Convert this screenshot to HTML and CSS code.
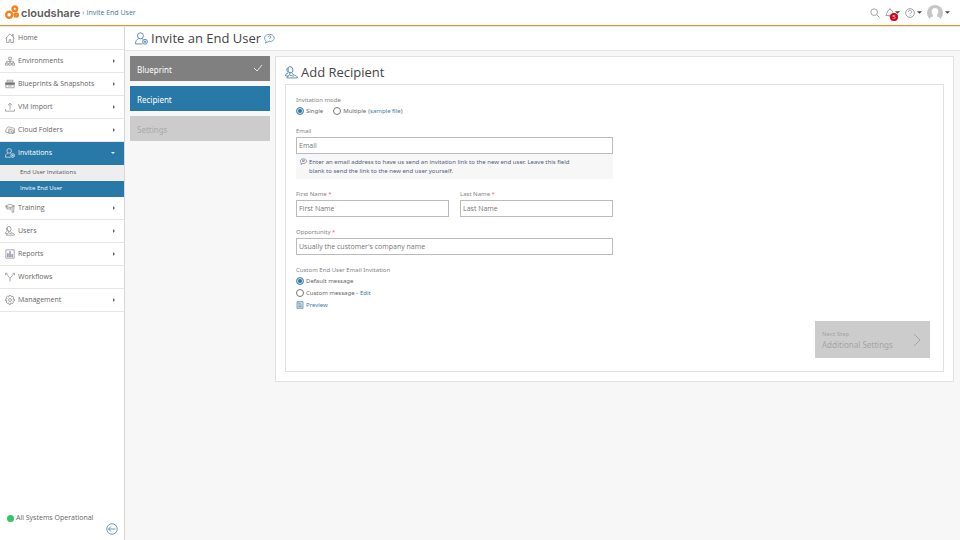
FILE: index.html
```html
<!DOCTYPE html>
<html lang="en">
<head>
<meta charset="utf-8">
<meta name="viewport" content="width=device-width, initial-scale=1">
<title>Invite End User</title>
<link rel="stylesheet" href="styles.css">
</head>
<body>
<svg class="defs" aria-hidden="true">
  <symbol id="user-plus" viewBox="0 0 24 24"><circle cx="10" cy="7" r="5.500"/><path d="M7 12c-4 2-6 4-6 10h13M13 12l2 2"/><circle cx="18.500" cy="18" r="4.500"/><path d="M16 18h5M18.500 15.500v5"/></symbol>
  <symbol id="users" viewBox="0 0 24 24"><ellipse cx="10" cy="7" rx="4.500" ry="5.800" transform="rotate(-12 10 7)"/><path d="M6 3C2 4 3 10 6 12L1 16v2l5 1M9 12v3l-6 7h20c0-3-2-4-8-6l-2-3M9 17l7 2"/></symbol>
  <symbol id="caret" viewBox="0 0 4 4"><path d="M0 1h4L2 3z"/></symbol>
</svg>
<header class="topbar">
  <a class="brand" href="#">
    <svg class="brand-mark" viewBox="0 0 14 15" aria-hidden="true"><circle cx="4.200" cy="9.800" r="3"/><circle cx="9.800" cy="3.800" r="2.300"/><circle cx="11.200" cy="10" r="1.600"/></svg>
    <span class="brand-name">cloudshare</span>
  </a>
  <span class="crumb-arrow">›</span>
  <a class="crumb" href="#">Invite End User</a>
  <div class="tools">
    <button class="tool search" aria-label="Search"><svg class="icon" viewBox="0 0 24 24"><circle cx="10" cy="10" r="8"/><path d="M16 16l7 7"/></svg></button>
    <button class="tool bell" aria-label="Notifications"><svg class="icon" viewBox="0 0 24 24"><path d="M2 18c4-3 2-13 9-14V2h2v2c7 1 5 11 9 14zM9 18c0 5 6 5 6 0"/></svg><span class="badge">5</span><svg class="caret"><use href="#caret"/></svg></button>
    <button class="tool" aria-label="Help"><svg class="icon" viewBox="0 0 24 24"><circle cx="12" cy="12" r="10.500"/><path d="M8 9c0-5 8-5 8 0 0 3-4 3-4 6M12 17v2"/></svg><svg class="caret"><use href="#caret"/></svg></button>
    <button class="tool account" aria-label="Account"><svg class="avatar" viewBox="0 0 16 16"><circle cx="8" cy="8" r="8" fill="#c6c6c6"/><path d="M2 16c0-3 2-4 4-4.500V10C4 8 4 3 8 3s4 5 2 7v1.500c2 .5 4 1.500 4 4.500z" fill="#fff"/></svg><svg class="caret"><use href="#caret"/></svg></button>
  </div>
</header>
<div class="shell">
  <aside class="sidebar">
    <nav>
      <a class="item" href="#"><svg class="icon" viewBox="0 0 24 24"><path d="M1 13L12 2l11 11M4 10v13h6v-7h4v7h6V10M18 7V3h2v6"/></svg><span>Home</span></a>
      <a class="item more" href="#"><svg class="icon" viewBox="0 0 24 24"><path d="M9 3h6v6H9zM12 9v8M4 17v-4h16v4M1 17h6v5H1zM9 17h6v5H9zM17 17h6v5h-6z"/></svg><span>Environments</span></a>
      <a class="item more" href="#"><svg class="icon" viewBox="0 0 24 24"><path d="M5 3h14v4H5z"/><path d="M1 9h22v4H1z" fill="currentColor"/><path d="M2 14h20v7H2zM8 17h8"/></svg><span>Blueprints &amp; Snapshots</span></a>
      <a class="item more" href="#"><svg class="icon" viewBox="0 0 24 24"><path d="M12 18V3M7 8l5-5 5 5M1 17v5h22v-5"/></svg><span>VM Import</span></a>
      <a class="item more" href="#"><svg class="icon" viewBox="0 0 24 24"><path d="M9 18H5c-5 0-5-7-1-8 0-6 8-7 10-3 5-2 9 1 9 5v7h-6M9 10h5l1 2h5v8H9zM12 13v5M16 14v5"/></svg><span>Cloud Folders</span></a>
      <a class="item more open" href="#"><svg class="icon"><use href="#user-plus"/></svg><span>Invitations</span></a>
      <a class="sub" href="#">End User Invitations</a>
      <a class="sub current" href="#" aria-current="page">Invite End User</a>
      <a class="item more" href="#"><svg class="icon" viewBox="0 0 24 24"><path d="M1 7l11-4 11 4-11 4zM5 9v6c3-2 7-1 8 1V11M17 9v13h4V8M3 8v5"/></svg><span>Training</span></a>
      <a class="item more" href="#"><svg class="icon"><use href="#users"/></svg><span>Users</span></a>
      <a class="item more reports" href="#"><svg class="icon" viewBox="0 0 24 24"><path d="M2 2h20v20H2zM6 19v-8h2v8zM11 19V6h2v13zM16 19v-6h2v6z"/></svg><span>Reports</span></a>
      <a class="item" href="#"><svg class="icon" viewBox="0 0 24 24"><path d="M12 23v-8L3 4M1 8V3h5M12 15l9-11M18 3h5v5"/></svg><span>Workflows</span></a>
      <a class="item more" href="#"><svg class="icon" viewBox="0 0 24 24"><path d="M10 1h4l1 3 4-1 2 4-2 3 4 1v3l-4 1 1 4-3 2-3-2-1 4h-3l-1-4-4 1-2-3 2-3-4-1v-3l4-1-2-4 3-2 3 2z"/><circle cx="12" cy="12" r="3.500"/></svg><span>Management</span></a>
    </nav>
    <footer class="status">
      <a class="systems" href="#">All Systems Operational</a>
      <button class="collapse" aria-label="Collapse menu"><svg class="icon" viewBox="0 0 24 24"><circle cx="12" cy="12" r="10.500"/><path d="M19 12H5M10 7l-5 5 5 5"/></svg></button>
    </footer>
  </aside>
  <main class="main">
    <div class="page-title">
      <svg class="icon"><use href="#user-plus"/></svg>
      <h1>Invite an End User</h1>
      <svg class="icon help" viewBox="0 0 24 24"><path d="M5 18C-2 13 1 3 12 3s14 11 5 15c-2 1-6 1-8 1l-6 3zM9 9c0-4 6-4 6 0 0 2-3 2-3 4M12 15v1"/></svg>
    </div>
    <div class="wizard">
      <ol class="steps">
        <li class="step done">Blueprint<svg class="check" viewBox="0 0 10 8"><path d="M1 4l3 3 5-6"/></svg></li>
        <li class="step active">Recipient</li>
        <li class="step pending">Settings</li>
      </ol>
      <section class="card">
        <div class="card-title"><svg class="icon"><use href="#users"/></svg><h2>Add Recipient</h2></div>
        <form class="panel">
          <div class="fields">
            <div class="group" role="radiogroup" aria-labelledby="mode">
              <span class="label" id="mode">Invitation mode</span>
              <div class="choices">
                <label class="choice"><input type="radio" name="mode" checked>Single</label>
                <label class="choice"><input type="radio" name="mode">Multiple</label>
                <span class="sample">(<a href="#">sample file</a>)</span>
              </div>
            </div>
            <div class="group">
              <label class="label" for="email">Email</label>
              <input class="text" id="email" type="email" placeholder="Email">
              <p class="hint"><svg class="icon" viewBox="0 0 24 24"><path d="M5 18C-2 13 1 3 12 3s14 11 5 15c-2 1-6 1-8 1l-6 3zM7 8h10M7 12h8"/></svg><span>Enter an email address to have us send an invitation link to the new end user. Leave this field blank to send the link to the new end user yourself.</span></p>
            </div>
            <div class="pair">
              <div class="group">
                <label class="label" for="first">First Name <b>*</b></label>
                <input class="text" id="first" type="text" placeholder="First Name">
              </div>
              <div class="group">
                <label class="label" for="last">Last Name <b>*</b></label>
                <input class="text" id="last" type="text" placeholder="Last Name">
              </div>
            </div>
            <div class="group">
              <label class="label" for="opportunity">Opportunity <b>*</b></label>
              <input class="text" id="opportunity" type="text" placeholder="Usually the customer's company name">
            </div>
            <div class="group" role="radiogroup" aria-labelledby="message">
              <span class="label" id="message">Custom End User Email Invitation</span>
              <div class="messages">
                <label class="choice"><input type="radio" name="message" checked>Default message</label>
                <div class="choice-row"><label class="choice"><input type="radio" name="message">Custom message -</label><a href="#">Edit</a></div>
                <a class="preview" href="#"><svg class="icon" viewBox="0 0 24 24"><path d="M3 2h18v20H3z" fill="#dce4ea"/><path d="M7 7h7M7 12h10M7 17h10"/></svg>Preview</a>
              </div>
            </div>
          </div>
          <button class="next" type="button" disabled>
            <span class="next-text"><small>Next Step</small><strong>Additional Settings</strong></span>
            <svg class="chevron" viewBox="0 0 8 14"><path d="M1 1l6 6-6 6"/></svg>
          </button>
        </form>
      </section>
    </div>
  </main>
</div>
</body>
</html>
```
FILE: styles.css
```css
* { box-sizing: border-box; }
body {
  margin: 0;
  min-height: 100vh;
  display: flex;
  flex-direction: column;
  background: #f7f7f7;
  color: #666;
  font: 7px/10px "Open Sans", "Noto Sans", sans-serif;
}
a { color: #3f7a9f; text-decoration: none; }
button { border: 0; padding: 0; background: none; color: inherit; font: inherit; }
h1, h2 { margin: 0; color: #444; font-size: 13px; line-height: 18px; font-weight: 400; }
.defs { display: none; }
.icon {
  width: 10px;
  height: 10px;
  flex: none;
  fill: none;
  stroke: currentColor;
  stroke-width: 2;
}

.topbar {
  display: flex;
  align-items: center;
  height: 26px;
  padding: 0 10px 0 5px;
  background: #fff;
  border-bottom: 1px solid #e8941c;
}
.brand { display: flex; align-items: center; gap: 2px; color: #5c5c5c; }
.brand-mark { width: 14px; height: 15px; fill: none; stroke: #f5831f; stroke-width: 2.4; }
.brand-name { font: 600 11px/14px Inter, sans-serif; }
.crumb-arrow { margin: 0 2px; }
.tools { display: flex; align-items: center; gap: 5px; margin-left: auto; color: #777; }
.tool { display: flex; align-items: center; gap: 2px; position: relative; }
.tool .icon { stroke-width: 1.6; }
.bell { gap: 0; }
.caret { width: 5px; height: 5px; fill: #444; }
.avatar { width: 16px; height: 16px; }
.badge {
  position: absolute;
  left: 5px;
  top: 5px;
  width: 8px;
  height: 8px;
  border-radius: 50%;
  background: #d0021b;
  color: #fff;
  font-size: 6px;
  line-height: 8px;
  text-align: center;
}

.shell { display: flex; flex: 1; border-top: 1px solid #e6e6e6; }
.sidebar {
  display: flex;
  flex-direction: column;
  justify-content: space-between;
  width: 125px;
  flex: none;
  background: #fff;
  border-right: 1px solid #d6d6d6;
}
.item {
  display: flex;
  align-items: center;
  gap: 3px;
  height: 23px;
  padding: 0 9px 0 5px;
  border-bottom: 1px solid #e6e6e6;
  color: #666;
}
.item .icon { stroke-width: 1.5; color: #777; }
.item.more::after {
  content: "";
  margin-left: auto;
  border: 2px solid transparent;
  border-left-color: #666;
  border-right-width: 0;
}
.item.open { background: #2878a8; border-color: #2878a8; color: #fff; }
.item.open .icon { color: #fff; }
.item.open::after { border: 2px solid transparent; border-top-color: #fff; border-bottom-width: 0; }
.item.reports .icon { color: #77708c; }
.sub { display: block; height: 16px; padding-left: 20px; background: #eee; color: #555; font-size: 6px; line-height: 14px; }
.sub.current { background: #2878a8; color: #fff; }
.status { display: flex; flex-direction: column; padding: 0 6px 5px 7px; }
.systems { display: flex; align-items: center; gap: 2px; color: #666; }
.systems::before { content: ""; width: 7px; height: 7px; border-radius: 50%; background: #2dc866; }
.collapse { align-self: flex-end; color: #3f7a9f; }
.collapse .icon { display: block; width: 12px; height: 12px; stroke-width: 1.5; }

.main { flex: 1; min-width: 0; }
.page-title {
  display: flex;
  align-items: center;
  gap: 3px;
  height: 24px;
  padding: 0 10px 1px;
  background: #fff;
  border-bottom: 1px solid #e2e6e6;
}
.page-title .icon, .card-title .icon { width: 13px; height: 13px; color: #3f7a9f; stroke-width: 1.5; }
.page-title .help { width: 11px; height: 11px; }
.wizard { display: flex; align-items: flex-start; gap: 5px; padding: 5px 6px 5px 5px; }
.steps { display: flex; flex-direction: column; gap: 5px; width: 140px; flex: none; margin: 0; padding: 0; list-style: none; }
.step {
  display: flex;
  align-items: center;
  justify-content: space-between;
  height: 25px;
  padding: 2px 7px 0;
  color: #fff;
  font-family: "Noto Sans", sans-serif;
  font-size: 8px;
}
.step.done { background: #808080; }
.step.active { background: #2878a8; }
.step.pending { background: #ccc; color: #aaa; }
.check { width: 10px; height: 8px; margin-bottom: 3px; fill: none; stroke: #e4e4e4; }
.card { flex: 1; padding: 6px 9px 9px; background: #fff; border: 1px solid #e0e2e2; }
.card-title { display: flex; align-items: center; gap: 3px; margin-bottom: 3px; }
.panel {
  display: flex;
  flex-direction: column;
  padding: 10px 13px 13px 10px;
  border: 1px solid #e0e2e2;
  font-family: "Noto Sans", sans-serif;
}
.fields { display: flex; flex-direction: column; gap: 10px; width: 317px; }
.group { display: flex; flex-direction: column; }
.pair { display: grid; grid-template-columns: 1fr 1fr; gap: 11px; }
.label { display: block; height: 11px; color: #858585; font-size: 6px; line-height: 11px; }
.label b { color: #ff6060; font-weight: 400; }
.choices { display: flex; align-items: center; }
.choice { display: flex; align-items: center; font-size: 6px; }
.choices .choice { margin-right: 10px; }
.choices .choice + .choice { margin-right: 2px; }
.sample, .messages a { font-size: 6px; }
input[type="radio"] {
  appearance: none;
  width: 8px;
  height: 8px;
  margin: 0 2px 0 0;
  border: 1px solid #777;
  border-radius: 50%;
  background: #fff;
}
input[type="radio"]:checked {
  border-color: #5f8fb0;
  background: #2878a8;
  box-shadow: inset 0 0 0 1px #d4e4ee;
}
.text {
  width: 100%;
  height: 17px;
  padding: 0 2px;
  border: 1px solid #bbb;
  background: #fff;
  color: #555;
  font: 7px/10px "Open Sans", "Noto Sans", sans-serif;
}
.text::placeholder { color: #777; }
.hint { display: flex; gap: 2px; margin: 0; padding: 4px 30px 3px 4px; background: #f7f7f7; color: #52607a; font-size: 6px; line-height: 9px; }
.hint .icon { width: 7px; height: 7px; }
.messages { display: flex; flex-direction: column; align-items: flex-start; gap: 2px; }
.choice-row { display: flex; gap: 2px; }
.preview { display: flex; align-items: center; gap: 2px; }
.preview .icon { width: 8px; height: 8px; }
.next {
  display: flex;
  align-items: center;
  justify-content: space-between;
  align-self: flex-end;
  width: 115px;
  height: 37px;
  margin-top: 11px;
  padding: 0 9px 0 7px;
  background: #ccc;
  color: #a5a5a5;
  text-align: left;
}
.next-text { display: flex; flex-direction: column; }
.next small { font-size: 6px; }
.next strong { font-size: 8px; line-height: 12px; font-weight: 400; }
.chevron { width: 8px; height: 14px; fill: none; stroke: currentColor; }
```
